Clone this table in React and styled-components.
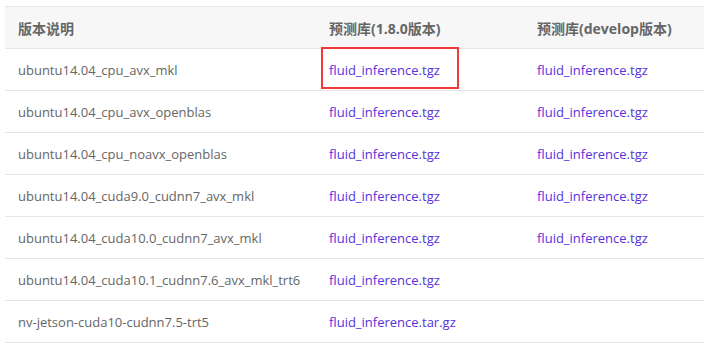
import React from 'react';
import styled, { createGlobalStyle } from 'styled-components';

const GlobalStyle = createGlobalStyle`
  body {
    margin: 0;
    background: #fff;
    font-family: 'Open Sans', 'Noto Sans CJK SC', sans-serif;
  }
`;

const Wrap = styled.div`
  padding: 6px 6px 0 5px;
`;

const Table = styled.table`
  width: 699px;
  table-layout: fixed;
  border-collapse: collapse;
  font-size: 13px;
  color: #666;
`;

const HeadCell = styled.th`
  box-sizing: border-box;
  height: 42px;
  padding: 0 13px;
  text-align: left;
  font-size: 14px;
  font-weight: bold;
  color: #666;
  background: #f7f7f7;
  border-top: 1px solid #e6e6e6;
  border-bottom: 1px solid #e6e6e6;
  width: ${(p) => p.w}px;
  white-space: nowrap;
`;

const Cell = styled.td`
  height: 41px;
  padding: 0 13px;
  border-bottom: 1px solid #e6e6e6;
  white-space: nowrap;
`;

const LinkCell = styled(Cell)`
  position: relative;
`;

const FileLink = styled.a`
  color: #5533dd;
  text-decoration: none;
`;

const Marker = styled.span`
  position: absolute;
  left: 5px;
  top: -2px;
  width: 138px;
  height: 42px;
  border: 2px solid #f33a3a;
  box-sizing: border-box;
  pointer-events: none;
`;

const rows = [
  ['ubuntu14.04_cpu_avx_mkl', 'fluid_inference.tgz', 'fluid_inference.tgz'],
  ['ubuntu14.04_cpu_avx_openblas', 'fluid_inference.tgz', 'fluid_inference.tgz'],
  ['ubuntu14.04_cpu_noavx_openblas', 'fluid_inference.tgz', 'fluid_inference.tgz'],
  ['ubuntu14.04_cuda9.0_cudnn7_avx_mkl', 'fluid_inference.tgz', 'fluid_inference.tgz'],
  ['ubuntu14.04_cuda10.0_cudnn7_avx_mkl', 'fluid_inference.tgz', 'fluid_inference.tgz'],
  ['ubuntu14.04_cuda10.1_cudnn7.6_avx_mkl_trt6', 'fluid_inference.tgz', ''],
  ['nv-jetson-cuda10-cudnn7.5-trt5', 'fluid_inference.tar.gz', ''],
];

const App = () => {
  return (
    <Wrap>
      <GlobalStyle />
      <Table>
        <thead>
          <tr>
            <HeadCell w={311}>版本说明</HeadCell>
            <HeadCell w={208}>预测库(1.8.0版本)</HeadCell>
            <HeadCell w={180}>预测库(develop版本)</HeadCell>
          </tr>
        </thead>
        <tbody>
          {rows.map((r, i) => (
            <tr key={i}>
              <Cell>{r[0]}</Cell>
              <LinkCell>
                <FileLink href="#">{r[1]}</FileLink>
                {i === 0 && <Marker />}
              </LinkCell>
              <Cell>{r[2] && <FileLink href="#">{r[2]}</FileLink>}</Cell>
            </tr>
          ))}
        </tbody>
      </Table>
    </Wrap>
  );
};

export default App;
